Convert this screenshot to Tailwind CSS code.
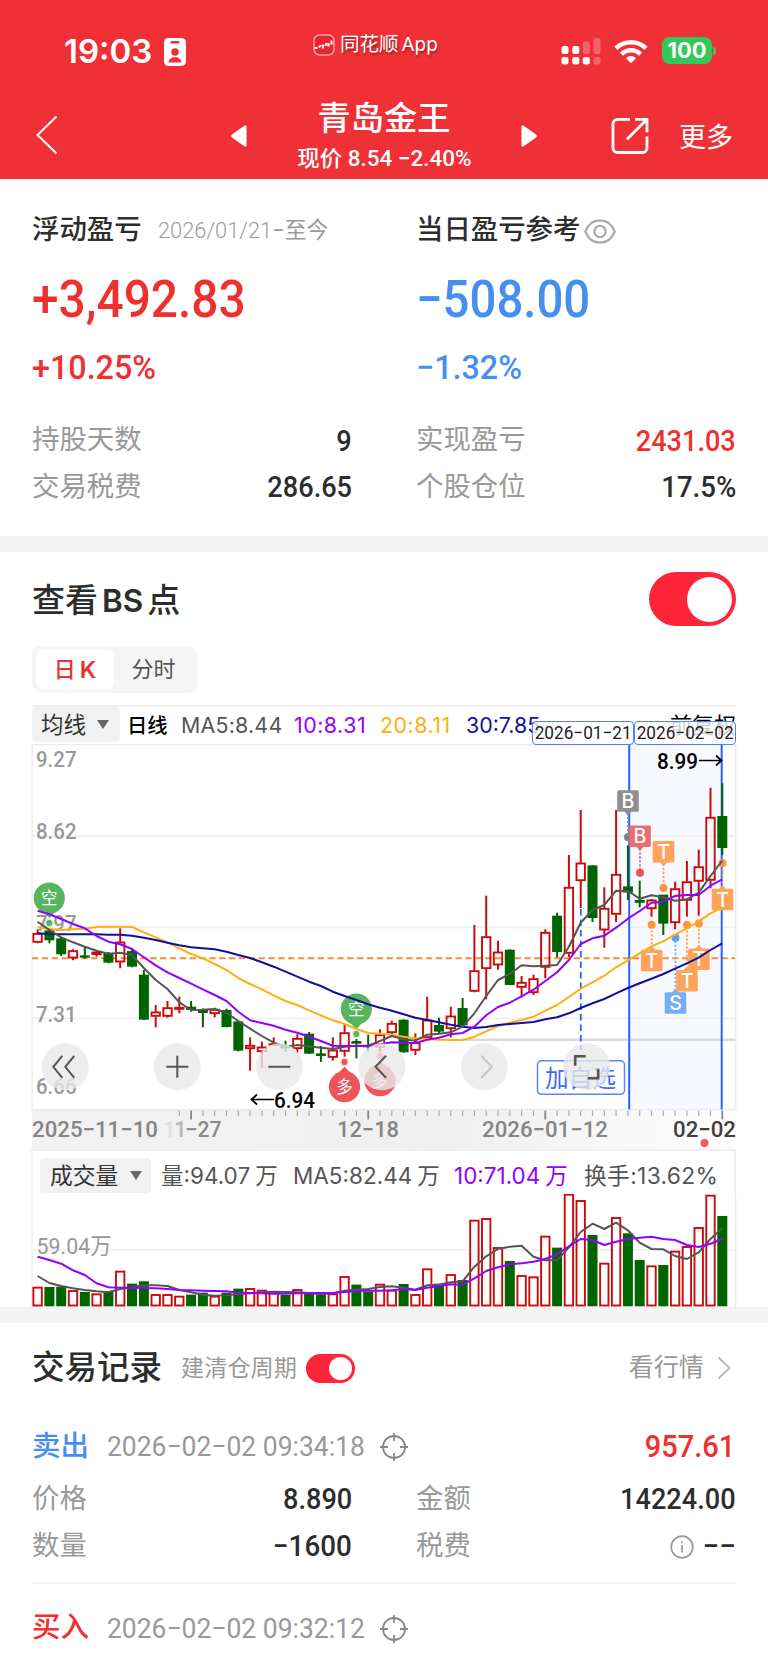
<!DOCTYPE html>
<html lang="zh-CN">
<head>
<meta charset="utf-8">
<title>青岛金王</title>
<script src="https://cdn.jsdelivr.net/npm/@tailwindcss/browser@4"></script>
</head>
<body class="w-[768px] h-[1663px] overflow-hidden bg-white text-[#2d2d2d] font-['Roboto','Noto_Sans_CJK_SC',sans-serif] whitespace-nowrap">

<header class="h-[179px] bg-[#f03037] text-white">
  <div class="h-[91px] flex items-start">
    <div class="w-[313px] pl-[64px] pt-[31px] flex items-center gap-[11px]">
      <span class="w-[89px] font-['Inter'] font-semibold text-[33px] leading-[41px]">19:03</span>
      <svg class="w-[22px] h-[28px]" viewBox="0 0 22 28"><rect width="22" height="28" rx="4.5" fill="#fff"/><rect x="6.5" y="3" width="9" height="2.6" rx="1.3" fill="#f03037"/><circle cx="11" cy="14" r="3.8" fill="#f03037"/><path d="M4.5 24.5c.4-3.500 3-5.300 6.500-5.300s6.100 1.800 6.500 5.300z" fill="#f03037"/></svg>
    </div>
    <div class="w-[248px] pt-[31px] flex items-center gap-[5px] [text-shadow:1px_2px_2px_rgba(0,0,0,.35)]">
      <svg class="w-[22px] h-[22px]" viewBox="0 0 22 22"><rect x="1" y="1" width="20" height="20" rx="5.500" fill="#e8262d" stroke="#ff9fa2" stroke-width="1.500"/><path d="M1.500 14h3M6 13.500l2-2.500M10 10.500v4M12.500 12l1-3M15.500 9v3.500M18.500 10.500V6.500" stroke="#fff" stroke-width="2" fill="none"/></svg>
      <span class="text-[19.500px] leading-[26px] font-['Inter','Noto_Sans_CJK_SC',sans-serif]">同花顺<span class="ml-[3px] text-[19px]">App</span></span>
    </div>
    <div class="pt-[37px] flex items-start">
      <svg class="w-[40px] h-[28px]" viewBox="0 0 40 28" fill="#fff"><rect x=".5" y="9" width="7" height="8" rx="2.200"/><rect x="11.300" y="9" width="7" height="8" rx="2.200"/><rect x=".5" y="20" width="7" height="7.500" rx="2.200"/><rect x="11.300" y="20" width="7" height="7.500" rx="2.200"/><rect x="21.800" y="20" width="7" height="7.500" rx="2.200"/><g opacity=".25"><rect x="21.800" y="4.500" width="7" height="12.500" rx="2.200"/><rect x="32.500" y="1" width="7" height="16" rx="2.200"/><rect x="32.500" y="20" width="7" height="7.500" rx="2.200"/></g></svg>
      <svg class="ml-[13px] mt-[2px] w-[34px] h-[25px]" viewBox="0 0 34 25"><g fill="none" stroke="#fff" stroke-width="4.400"><path d="M2 9.300a21.500 21.500 0 0 1 30 0"/><path d="M7.500 15.200a13.500 13.500 0 0 1 19 0"/></g><path d="M17 24.300l-5-5.100a7 7 0 0 1 10 0z" fill="#fff"/></svg>
      <span class="ml-[14px] w-[50px] h-[27px] rounded-[8px] bg-[#34c759] flex items-center justify-center font-['Inter'] font-bold text-[22px] leading-[27px]">100</span>
      <span class="ml-[1px] mt-[10px] w-[3px] h-[8px] rounded-r-[3px] bg-[#34c759]"></span>
    </div>
  </div>
  <div class="h-[88px] flex items-start">
    <svg class="ml-[35px] mt-[24px] w-[23px] h-[40px]" viewBox="0 0 23 40"><path d="M21.500 1.500L2.500 20l19 18.500" fill="none" stroke="#fff" stroke-width="2"/></svg>
    <svg class="ml-[173px] mt-[34px] w-[16px] h-[22px]" viewBox="0 0 16 22"><path d="M15.500 2v18c0 1.500-1.200 2-2.300 1.200L1 12.400c-1-.8-1-2 0-2.800L13.200.8C14.300 0 15.500.5 15.500 2z" fill="#fff"/></svg>
    <div class="w-[274px] pt-[8px] flex flex-col items-center">
      <span class="text-[33.300px] leading-[40px] font-medium">青岛金王</span>
      <span class="text-[22px] leading-[40px] font-medium origin-center scale-x-[1.02]">现价 8.54 −2.40%</span>
    </div>
    <svg class="mt-[34px] w-[16px] h-[22px]" viewBox="0 0 16 22"><path d="M.5 2v18c0 1.500 1.200 2 2.300 1.200L15 12.400c1-.8 1-2 0-2.800L2.800.8C1.700 0 .5.5.5 2z" fill="#fff"/></svg>
    <svg class="ml-[74px] mt-[26px] w-[38px] h-[38px]" viewBox="0 0 38 38" fill="none" stroke="#fff" stroke-width="2.800"><path d="M19 2.300H6.500a4.500 4.500 0 0 0-4.500 4.500V31a4.500 4.500 0 0 0 4.500 4.500h25A4.500 4.500 0 0 0 36 31V19.500M24 2.300h12v13M36 2.300L16 22.300"/></svg>
    <span class="ml-[30px] mt-[27px] text-[27px] leading-[40px]">更多</span>
  </div>
</header>

<section class="h-[357px] pl-[32px] pr-[33px] grid grid-cols-[352px_319px] content-start pt-[32px]">
  <div class="h-[40px] flex items-center"><span class="text-[27.400px] font-medium">浮动盈亏</span><span class="ml-[16px] text-[22.500px] text-[#9a9a9a] origin-left scale-x-[.97]"><span class="font-light">2026/01/21</span>−至今</span></div>
  <div class="h-[40px] ml-[32px] flex items-center"><span class="text-[27.400px] font-medium">当日盈亏参考</span><svg class="ml-[4px] w-[32px] h-[25px] shrink-0" viewBox="0 0 32 25" fill="none" stroke="#aaa" stroke-width="2.200"><path d="M1.300 12.500C4 5.500 9.500 1.300 16 1.300s12 4.200 14.700 11.200C28 19.500 22.500 23.700 16 23.700S4 19.500 1.300 12.500z"/><circle cx="16" cy="12.500" r="5.600"/></svg></div>
  <div class="h-[98px] flex items-center text-[52px] font-medium text-[#ee302f]"><span class="origin-left scale-x-[.92]">+3,492.83</span></div>
  <div class="h-[98px] ml-[32px] flex items-center text-[52px] font-medium text-[#468ff0]"><span class="origin-left scale-x-[.91]">−508.00</span></div>
  <div class="h-[36px] flex items-center text-[34px] font-medium text-[#ee302f]"><span class="origin-left scale-x-[.95]">+10.25%</span></div>
  <div class="h-[36px] ml-[32px] flex items-center text-[34px] font-medium text-[#468ff0]"><span class="origin-left scale-x-[.95]">−1.32%</span></div>
  <div class="mt-[33px] w-[320px] h-[46px] flex items-center justify-between"><span class="text-[27.400px] text-[#999]">持股天数</span><span class="text-[29.500px] font-medium origin-right scale-x-[.92]">9</span></div>
  <div class="mt-[33px] ml-[32px] h-[46px] w-[320px] flex items-center justify-between"><span class="text-[27.400px] text-[#999]">实现盈亏</span><span class="text-[29.500px] font-medium text-[#ee302f] origin-right scale-x-[.92]">2431.03</span></div>
  <div class="w-[320px] h-[47px] flex items-center justify-between"><span class="text-[27.400px] text-[#999]">交易税费</span><span class="text-[29.500px] font-medium origin-right scale-x-[.92]">286.65</span></div>
  <div class="ml-[32px] h-[47px] w-[320px] flex items-center justify-between"><span class="text-[27.400px] text-[#999]">个股仓位</span><span class="text-[29.500px] font-medium origin-right scale-x-[.935]">17.5%</span></div>
</section>
<div class="h-[16px] bg-[#f4f4f4]"></div>

<section class="h-[755px]">
  <div class="h-[94px] pl-[32px] pr-[32px] flex items-center justify-between">
    <span class="pt-[3px] text-[33px] font-medium font-['Inter','Noto_Sans_CJK_SC',sans-serif]">查看<span class="mx-[4px] text-[31.500px] font-semibold">BS</span>点</span>
    <span class="w-[87px] h-[54px] rounded-full bg-[#ff2538] p-[4.500px] flex justify-end"><span class="w-[45px] h-[45px] rounded-full bg-white"></span></span>
  </div>
  <div class="ml-[32px] w-[165px] h-[47px] rounded-[9px] bg-[#f5f5f5] p-[4px] flex items-center text-[22px] text-[#555]">
    <span class="w-[78px] h-[39px] rounded-[7px] bg-white text-[#ee302f] font-medium flex items-center justify-center">日<span class="ml-[4px] text-[23.500px] font-['Inter'] font-semibold">K</span></span>
    <span class="w-[79px] text-center">分时</span>
  </div>

  <div class="relative mt-[12px] ml-[32px] w-[704px] h-[39px] border-t-2 border-[#f0f0f0] flex items-start font-['Inter','Noto_Sans_CJK_SC',sans-serif] text-[21.400px] leading-[37px]">
    <span class="w-[88px] h-[35px] rounded-[4px] bg-[#f1f1f1] pl-[9px] flex items-center gap-[11px] text-[22.500px] text-[#333]">均线<svg class="w-[12px] h-[9px]" viewBox="0 0 12 9"><path d="M0 0h12L6 9z" fill="#666"/></svg></span>
    <span class="w-[61px] pl-[7px] text-[20.300px] font-medium text-black">日线</span>
    <span class="w-[113px] text-[#555] tracking-[.2px]">MA5:8.44</span>
    <span class="w-[86px] text-[#9400ff] tracking-[.5px]">10:8.31</span>
    <span class="w-[86px] text-[#ffaf0f] tracking-[.5px]">20:8.11</span>
    <span class="text-[#12129a]">30:7.85</span>
    <span class="ml-auto text-[22px] text-black">前复权</span>
    <span class="absolute left-[500px] top-[14px] w-[102px] h-[24px] rounded-[4px] border-[1.500px] border-[#4c80ff] bg-white/80 flex items-center justify-center font-['Roboto'] text-[18.500px] text-[#222]"><span class="scale-x-[.93]">2026−01−21</span></span>
    <span class="absolute left-[602px] top-[14px] w-[102px] h-[24px] rounded-[4px] border-[1.500px] border-[#4c80ff] bg-white/80 flex items-center justify-center font-['Roboto'] text-[18.500px] text-[#222]"><span class="scale-x-[.93]">2026−02−02</span></span>
  </div>

  <svg id="kline" class="block w-[768px] h-[405px]" viewBox="0 744 768 405" font-family="Roboto, 'Noto Sans CJK SC', sans-serif"></svg>

  <div class="h-[45px] ml-[31px] w-[705px] border-t-2 border-x-2 border-[#f0f0f0] flex items-start font-['Inter','Noto_Sans_CJK_SC',sans-serif] text-[22.500px] text-[#555] leading-[36px] pt-[7px]">
    <span class="ml-[7px] w-[111px] h-[35px] rounded-[4px] bg-[#f1f1f1] pl-[10px] flex items-center gap-[12px] text-[22.800px] text-[#333]">成交量<svg class="w-[12px] h-[9px]" viewBox="0 0 12 9"><path d="M0 0h12L6 9z" fill="#666"/></svg></span>
    <span class="ml-[10px] w-[132px]">量:94.07<span class="ml-[5px]">万</span></span>
    <span class="w-[161px]">MA5:82.44<span class="ml-[5px]">万</span></span>
    <span class="w-[130px] text-[#9400ff]">10:71.04<span class="ml-[5px]">万</span></span>
    <span class="tracking-[.3px] text-[22.800px]">换手:13.62%</span>
  </div>
  <svg id="volume" class="block w-[768px] h-[113px]" viewBox="0 1194 768 113" font-family="Roboto, 'Noto Sans CJK SC', sans-serif"></svg>
</section>
<div class="h-[16px] bg-[#f4f4f4]"></div>

<section class="px-[32px]">
  <div class="h-[88px] pt-[2px] flex items-center">
    <span class="text-[32.500px] font-medium">交易记录</span>
    <span class="ml-[19px] text-[23.200px] text-[#999]">建清仓周期</span>
    <span class="ml-[9px] w-[49px] h-[29px] rounded-full bg-[#ff2538] p-[3px] flex justify-end"><span class="w-[23px] h-[23px] rounded-full bg-white"></span></span>
    <span class="ml-auto text-[25.200px] text-[#999]">看行情</span>
    <svg class="ml-[13px] mr-[5px] w-[14px] h-[24px]" viewBox="0 0 14 24"><path d="M1.500 1.500L12.500 12l-11 10.500" fill="none" stroke="#bbb" stroke-width="2"/></svg>
  </div>
  <div class="h-[72px] flex items-center">
    <span class="w-[58px] text-[28.500px] font-medium text-[#468ff0]">卖出</span>
    <span class="w-[273px] ml-[17px] text-[28px] text-[#999]"><span class="inline-block origin-left scale-x-[.945]">2026−02−02 09:34:18</span></span>
    <svg class="w-[28px] h-[28px]" viewBox="0 0 28 28" fill="none" stroke="#888" stroke-width="1.800"><circle cx="14" cy="14" r="11"/><path d="M14 0v8M14 20v8M0 14h8M20 14h8"/></svg>
    <span class="ml-auto mr-[1px] text-[31.500px] font-medium text-[#ee302f] origin-right scale-x-[.92]">957.61</span>
  </div>
  <div class="h-[99px] grid grid-cols-[320px_320px] gap-x-[64px] content-start text-[27.400px] text-[#999]">
    <div class="h-[33px] mb-[14px] flex items-center justify-between"><span>价格</span><span class="text-[29.500px] font-medium text-[#2d2d2d] origin-right scale-x-[.92]">8.890</span></div>
    <div class="h-[33px] mb-[14px] flex items-center justify-between"><span>金额</span><span class="text-[29.500px] font-medium text-[#2d2d2d] origin-right scale-x-[.92]">14224.00</span></div>
    <div class="h-[33px] flex items-center justify-between"><span>数量</span><span class="text-[29.500px] font-medium text-[#2d2d2d] origin-right scale-x-[.94]">−1600</span></div>
    <div class="h-[33px] flex items-center"><span>税费</span><svg class="ml-auto w-[24px] h-[24px]" viewBox="0 0 24 24" fill="none" stroke="#999" stroke-width="1.700"><circle cx="12" cy="12" r="10.800"/><path d="M12 10v7.500M12 6.300v2"/></svg><span class="ml-[9px] text-[29.500px] font-medium text-[#2d2d2d]">−−</span></div>
  </div>
  <div class="h-[2px] bg-[#f2f2f2]"></div>
  <div class="h-[79px] pt-[10px] flex items-center">
    <span class="w-[58px] text-[28.500px] font-medium text-[#ee302f]">买入</span>
    <span class="w-[273px] ml-[17px] text-[28px] text-[#999]"><span class="inline-block origin-left scale-x-[.945]">2026−02−02 09:32:12</span></span>
    <svg class="w-[28px] h-[28px]" viewBox="0 0 28 28" fill="none" stroke="#888" stroke-width="1.800"><circle cx="14" cy="14" r="11"/><path d="M14 0v8M14 20v8M0 14h8M20 14h8"/></svg>
  </div>
</section>

<script>
const X = i => +(37.6 + i * 11.806).toFixed(1);
const RED = '#cc0a0a', GREEN = '#006400';
// [up, high, body top, body bottom, low]
const third = (o, rows) => rows.map(r => [r[0], ...r.slice(1).map(v => o + v / 3)]);
const candles = [
  ...third(740, [
    [1,568,580,607,610],[0,568,572,600,610],[0,590,596,642,648],[1,628,632,654,661],[0,620,647,652,656],[1,630,636,644,650],
    [0,636,640,667,670],[1,565,606,666,685],[0,625,634,679,682],[0,690,705,838,840],[1,795,816,829,862],[1,783,803,829,833],
    [1,770,802,808,820],[0,783,801,809,815],[0,805,808,818,862],[1,803,808,821,832],[0,806,811,860,862],[0,842,845,931,934],
    [1,892,916,926,992],[1,905,921,935,985],[1,892,911,916,918],[0,902,917,924,936],[1,883,895,926,938],[0,876,882,940,942],
    [0,918,941,947,966],[1,892,930,952,962],[1,855,878,934,950],[0,897,904,910,955],[0,884,917,921,934],[1,868,884,922,935],
    [1,842,850,878,884],[0,838,840,936,938],[1,880,908,931,945],[1,770,840,893,898],[0,833,856,874,880],[1,800,828,866,892],
    [0,774,805,855,860],[1,555,692,754,757],[1,467,590,686,778],[1,602,636,675,689],[0,628,630,734,735]]),
  ...third(900, [[1,228,247,262,292],[1,224,236,278,285],[1,88,97,202,235],[0,38,48,155,172]]),
  [1,855,887.3,953.3,957],[1,810,863,880.7,908],[0,865,865.7,917.7,922],[1,887.3,908.3,930,947.7],[1,810,874.3,914.3,922],
  [0,845.3,886.7,892.3,900],[0,880.7,900.3,902.5,907.3],[1,899,900,908.7,916.7],[0,895,895,923.3,935],[1,881.7,888.7,922.7,929.3],
  [1,861,881.7,900.3,916.7],[1,849.7,866.7,881.3,915.7],[1,787.7,817.3,880.3,888.3],[0,783.3,816.3,847.7,855]];
const path = (ys) => ys.map((y, i) => `${i ? 'L' : 'M'}${X(i)} ${y.toFixed(1)}`).join('');
const mix = (a, b, c) => [...a.map(v => 740 + v / 3), ...b.map(v => 900 + v / 3), ...(c || []).map(v => 700 + v / 3)];
const ma5 = mix(
  [545,570,592,607,620,632,641,638,645,684,720,747,787,810,809,807,818,843,866,888,908,920,915,919,923,927,920,917,917,903,888,898,902,884,881,877,860,820,768,720,702],
  [196,199,197,195,140,68],[630,615,572,573,596,586,592,602,598,578,528,482]);
const ma10 = mix(
  [512,523,537,552,565,588,605,613,627,652,676,697,714,731,748,765,783,815,841,849,857,869,878,890,903,917,918,918,917,913,907,908,909,899,893,883,879,860,826,801,788],
  [289,269,243,217,180,132,115,107,83,56,33],[608,605,588,585,585,557,538]);
const ma20 = mix(
  [562,567,570,568,566,561,560,560,561,577,592,607,625,642,655,672,690,714,732,748,766,783,795,811,826,841,852,867,879,881,884,890,895,897,899,900,900,890,874,858,848],
  [360,350,332,315,291,266,247,227,202,181,160,139,124,104,85,64,40,22]);
const ma30 = mix(
  [580,582,583,583,583,583,584,584,587,593,600,608,616,622,625,628,635,645,654,667,680,695,710,725,738,755,768,780,793,803,812,823,833,840,847,854,860,864,861,855,852],
  [369,366,358,352,340,324,310,297,280,264,250,236,222,206,190,173,150,130]);
const line = (ys, c) => `<path d="${path(ys)}" fill="none" stroke="${c}" stroke-width="2" stroke-linejoin="round"/>`;
const label = (x, y, w, t, c, s = 22, fw = 500) => `<text x="${x}" y="${y}" font-size="${s}" font-weight="${fw}" fill="${c}" textLength="${w}" lengthAdjust="spacingAndGlyphs">${t}</text>`;
const ln = (x1, y1, x2, y2, c, w, extra = '') => `<path d="M${x1} ${y1}L${x2} ${y2}" stroke="${c}" stroke-width="${w}" fill="none" ${extra}/>`;

let s = `<defs><linearGradient id="ax"><stop offset="0" stop-color="#f2f2f2"/><stop offset=".6" stop-color="#f0f0f0"/><stop offset="1" stop-color="#fdfdfd"/></linearGradient></defs>`;
s += `<rect x="32" y="1110" width="704" height="39" fill="url(#ax)"/>`;
s += `<rect x="629" y="745" width="93" height="365" fill="#f7f9ff"/>`;
s += `<rect x="32" y="744.7" width="703.500" height="364.800" fill="none" stroke="#ececec" stroke-width="1.500"/>`;
for (const y of [836, 927.300, 1018.300]) s += ln(32, y, 735, y, '#f0f0f0', 1.800);
s += ln(465, 1039.800, 735.500, 1039.800, '#d9d9d9', 2.600);
s += ln(32, 958.300, 735, 958.300, '#ff8a33', 2, 'stroke-dasharray="6.300 3.550"');
s += ln(629.200, 745, 629.200, 1109.500, '#2a62ff', 2) + ln(721.700, 745, 721.700, 1109.500, '#2a62ff', 2);
candles.forEach(([up, h, t, b, l], i) => {
  const x = X(i), c = up ? RED : GREEN;
  if (up) s += ln(x, h, x, t, c, 2) + ln(x, b, x, l, c, 2) + `<rect x="${x - 4.200}" y="${t + .5}" width="8.400" height="${Math.max(b - t - 1, .5)}" fill="none" stroke="${c}" stroke-width="1.900"/>`;
  else s += ln(x, h, x, l, c, 2) + `<rect x="${x - 5}" y="${t - .3}" width="10" height="${b - t + .6}" fill="${c}"/>`;
});
s += ln(580.800, 909, 580.800, 1050, '#2a62ff', 1.800, 'stroke-dasharray="6.500 4"');
// round long / short signals: [x, dot y, circle y, glyph, colour]
[[49.300,923,898,'空','#57b55c'],[356.300,1034,1009,'空','#57b55c'],[344.500,1062,1086.700,'多','#ef5558'],[380,1056,1080.700,'多','#ef5558']].forEach(([x, d, y, t, c]) => {
  const k = d > y ? 1 : -1;
  s += `<circle cx="${x}" cy="${d}" r="4.500" fill="${c}" opacity=".25"/><circle cx="${x}" cy="${d}" r="2.900" fill="${c}"/><path d="M${x - 7} ${y + k * 13}L${x} ${y + k * 20}L${x + 7} ${y + k * 13}z" fill="${c}"/><circle cx="${x}" cy="${y}" r="15.600" fill="${c}"/>`;
  s += `<text x="${x}" y="${y + 6}" font-size="16.500" fill="#fff" text-anchor="middle">${t}</text>`;
});
[['9.27',767.300],['8.62',839],['7.97',930.700],['7.31',1021.500],['6.66',1094]].forEach(([t, y]) => s += label(36, y, 40.500, t, '#999', 22.300));
// square trade tags: [x, dot y, tag y, letter, colour, dot colour]
[[628,837.300,801,'B','#8f8f8f','#808080'],[640,872.700,836.300,'B','#ec6c70','#ee5157'],[663.500,888,851.700,'T','#ffa35c','#ff9440'],[722.500,863,899.500,'T','#ffa35c','#ff9440'],
 [651.700,924.700,960.500,'T','#ffa35c','#ff9440'],[675.500,937.700,1003,'S','#76aef3','#5a9ff0'],[687,925,980.700,'T','#ffa35c','#ff9440'],[698.900,923.500,959.300,'T','#ffa35c','#ff9440']].forEach(([x, d, y, t, c, k]) => {
  const g = d > y ? 1 : -1;
  s += ln(x, y, x, d, c, 1.900, 'stroke-dasharray="2.200 1.800"') + `<circle cx="${x}" cy="${d}" r="4" fill="${k}"/>`;
  s += `<path d="M${x - 4} ${y + g * 10}L${x} ${y + g * 14.500}L${x + 4} ${y + g * 10}z" fill="${c}"/><rect x="${x - 10.800}" y="${y - 10.800}" width="21.600" height="21.600" rx="1.500" fill="${c}"/>`;
  s += `<text x="${x}" y="${y + 7}" font-family="Inter" font-size="19.500" font-weight="500" fill="#fff" text-anchor="middle">${t}</text>`;
});
s += line(ma20, '#ffaf0f') + line(ma30, '#10109c') + line(ma5, '#555') + line(ma10, '#9400ff');
s += label(657, 769, 41, '8.99', '#000', 22.300) + `<path d="M699 760.500h22M716 755.500l5.500 5-5.500 5" fill="none" stroke="#000" stroke-width="1.700"/>`;
s += label(274, 1107.500, 41, '6.94', '#000', 22.300) + `<path d="M274 1099.500h-22M257 1094.500l-5.500 5 5.500 5" fill="none" stroke="#000" stroke-width="1.700"/>`;
s += `<rect x="537.500" y="1060.800" width="87" height="33.500" rx="4" fill="#fff" stroke="#5b86f7" stroke-width="1.500"/>` + label(545, 1087, 71, '加自选', '#3d6df2', 23.500, 400);
// floating chart controls
[[65.300,'M-3-11L-12 0l9 11M9-11L0 0l9 11'],[177.300,'M-11 0h22M0-11v22'],[279.300,'M-11 0h22'],[382,'M4-11L-6.500 0 4 11'],[484.300,'M-3-11L7.500 0-3 11'],[586.700,'M-11.500-1v-9.500H-1M11.500 2v9.500H1']].forEach(([x, d], i) => {
  s += `<g transform="translate(${x} 1066.800)"><circle r="23.500" fill="#e8e8e8" fill-opacity=".8"/><path d="${d}" fill="none" stroke="${i == 4 ? '#c4c4c4' : '#555'}" stroke-width="${i == 5 ? 2.600 : 2}"/></g>`;
});
// time axis
for (let i = 12; i < 59; i++) { const big = [13, 28, 43, 58].includes(i); s += ln(X(i), 1110.500, X(i), big ? 1119.500 : 1116, big ? '#888' : '#aaa', big ? 1.800 : 1.200); }
s += label(32, 1136.700, 126, '2025−11−10', '#858585', 22.500);
s += `<text y="1136.700" font-size="22.500" font-weight="500" fill="#909090"><tspan x="163" fill="#e0e0e0">1</tspan><tspan x="174" fill="#b8b8b8">1</tspan><tspan x="185">−</tspan></text>` + label(197.500, 1136.700, 24, '27', '#8a8a8a', 22.500);
s += label(337, 1136.700, 62, '12−18', '#858585', 22.500) + label(482, 1136.700, 126, '2026−01−12', '#858585', 22.500) + label(673, 1136.700, 63, '02−02', '#3f3f3f', 22.500);
s += `<circle cx="704.500" cy="1143" r="4" fill="#f4595c"/>`;
document.getElementById('kline').innerHTML = s;

const vols = [443,443,442,453,458,463,455,395,433,426,465,465,470,466,460,470,460,448,447,452,458,467,450,462,467,463,411,436,457,434,452,434,465,388,433,405,422,242,237,324,365,408,412,290,325,164,183,287,371,234,282,362,379,377,335,321,264,167,230];
const vUp = [1,0,0,1,0,1,0,1,0,0,1,1,1,0,0,1,0,0,1,1,1,0,1,0,0,1,1,0,0,1,1,0,1,1,0,1,0,1,1,1,0,1,1,1,0,1,1,0,1,1,0,0,1,0,1,1,1,1,0];
const v5 = [408,429,438,445,450,454,457,447,441,436,436,438,450,457,464,467,466,463,460,457,455,456,457,459,463,460,452,449,447,441,439,443,449,436,434,427,424,380,349,327,320,317,350,361,361,322,276,251,267,248,271,308,327,328,348,357,337,297,265];
const v10 = [350,360,371,391,405,430,442,443,443,444,445,447,450,451,452,453,454,458,459,460,461,461,460,459,459,459,456,453,452,452,451,447,450,443,438,433,434,415,393,382,373,370,365,357,343,319,297,300,315,305,297,293,290,297,300,315,321,311,297];
const vy = v => 1140 + v / 3;
let q = ln(32, 1194, 32, 1307, '#ececec', 1.500) + ln(735.500, 1194, 735.500, 1307, '#ececec', 1.500) + ln(32, 1250, 735, 1250, '#efefef', 1.500);
q += label(36.500, 1253.500, 75, '59.04万', '#999', 22.500, 400);
vols.forEach((v, i) => {
  const x = X(i), y = vy(v);
  q += vUp[i] ? `<rect x="${x - 4.200}" y="${y}" width="8.400" height="${1305.500 - y}" fill="#fff" stroke="${RED}" stroke-width="1.900"/>` : `<rect x="${x - 5}" y="${y - .7}" width="10" height="${1307 - y}" fill="${GREEN}"/>`;
});
q += line(v5.map(vy), '#555') + line(v10.map(vy), '#9400ff');
document.getElementById('volume').innerHTML = q;
</script>
</body>
</html>
